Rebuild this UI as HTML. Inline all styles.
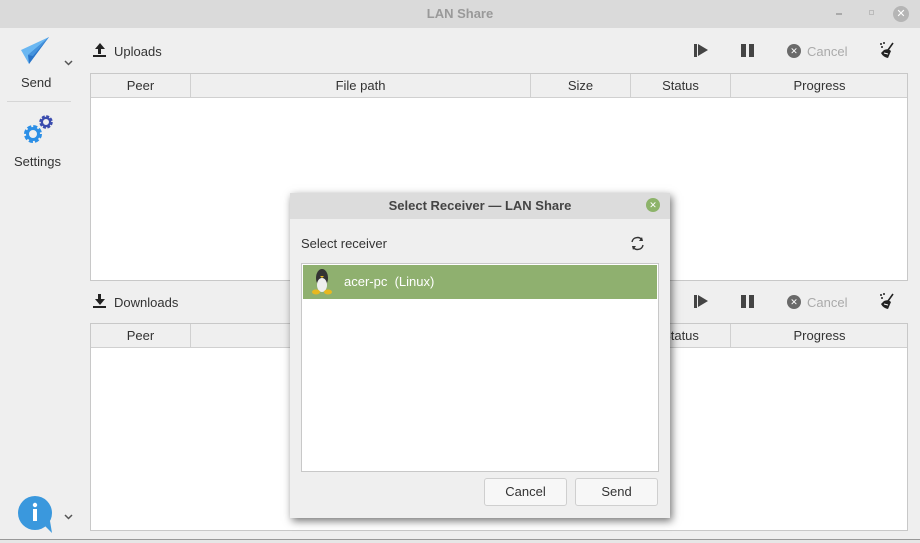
<!DOCTYPE html>
<html><head><style>
*{box-sizing:border-box;margin:0;padding:0}
body{width:920px;height:543px;background:#efefef;font-family:"Liberation Sans","DejaVu Sans",sans-serif;font-size:13px;color:#333;position:relative;overflow:hidden}
.abs{position:absolute}
.tb{left:0;top:0;width:920px;height:28px;background:#dadada;text-align:center;line-height:28px;color:#999;font-weight:bold;font-size:13px}
.tbl{background:#fff;border:1px solid #c8c8c8}
.hdr{position:absolute;left:0;top:0;right:0;height:24px;background:#efefef;border-bottom:1px solid #d0d0d0}
.hdr div{position:absolute;top:0;height:23px;line-height:23px;text-align:center;border-right:1px solid #d0d0d0}
.lbl{font-size:13px;color:#333}
.gray{color:#aaa}
.btn{position:absolute;top:478px;height:28px;background:#f7f7f7;border:1px solid #cfcfcf;border-radius:3px;text-align:center;line-height:26px}
</style></head><body>
<div class="abs tb">LAN Share</div>
<div class="abs" style="left:836px;top:13px;width:6px;height:2px;background:#aaa"></div>
<div class="abs" style="left:869px;top:10px;width:5px;height:5px;border:1px solid #bbb"></div>
<div class="abs" style="left:893px;top:6px;width:16px;height:16px;border-radius:50%;background:#b5b5b5;color:#fff;font-size:11px;text-align:center;line-height:16px;font-weight:bold">✕</div>

<svg width="0" height="0" style="position:absolute"><defs>
<g id="gear"><circle cx="0" cy="0" r="7" fill="none" stroke="currentColor" stroke-width="4" stroke-dasharray="3.7 1.8"/><circle cx="0" cy="0" r="5.5" fill="none" stroke="currentColor" stroke-width="3"/></g>
<g id="chev"><path d="M1 1 L4.5 4.5 L8 1" fill="none" stroke="#555" stroke-width="1.5"/></g>
<g id="broom"><path d="M14 1 L9 8" stroke="#222" stroke-width="1.6"/><path d="M5 8 Q9 6 12 9 L9 16 Q4 15 2 11 Z" fill="#222"/><path d="M5 11 L9 12" stroke="#fff" stroke-width="1"/><circle cx="2" cy="2" r="1" fill="#222"/><circle cx="5" cy="1" r="1" fill="#222"/><circle cx="3" cy="5" r="1" fill="#222"/></g>
</defs></svg>

<!-- sidebar -->
<svg class="abs" style="left:20px;top:36px" width="30" height="30" viewBox="0 0 30 30"><path d="M1 14 L29 1 L9 28 Z" fill="#6ab7f2"/><path d="M8 19 L29 1 L9 28 Z" fill="#2a74c8"/><path d="M8 19 L29 1 L13 20Z" fill="#4593dd"/></svg>
<svg class="abs" style="left:64px;top:60px" width="10" height="7"><use href="#chev"/></svg>
<div class="abs lbl" style="left:21px;top:75px">Send</div>
<div class="abs" style="left:7px;top:101px;width:64px;height:1px;background:#d6d6d6"></div>
<svg class="abs" style="left:22px;top:112px" width="34" height="34"><g transform="translate(11,22)" style="color:#2c8fe6"><use href="#gear"/></g><g transform="translate(24,10) scale(0.75)" style="color:#3b4cae"><use href="#gear"/></g></svg>
<div class="abs lbl" style="left:14px;top:154px">Settings</div>
<svg class="abs" style="left:17px;top:496px" width="36" height="38" viewBox="0 0 36 38"><circle cx="18" cy="17" r="17" fill="#3a98dd"/><path d="M26 28 L35 37 L33 25Z" fill="#3a98dd"/><circle cx="18" cy="9" r="2.2" fill="#fff"/><rect x="16" y="13" width="4" height="12" fill="#fff"/></svg>
<svg class="abs" style="left:64px;top:514px" width="10" height="7"><use href="#chev"/></svg>

<!-- uploads -->
<div class="abs" style="left:93px;top:43px;width:13px;height:14px;border-bottom:2px solid #222"><div style="margin:0 auto;width:0;height:0;border-left:5px solid transparent;border-right:5px solid transparent;border-bottom:6px solid #222"></div><div style="margin:0 auto;width:3px;height:5px;background:#222"></div></div>
<div class="abs lbl" style="left:114px;top:44px">Uploads</div>
<div class="abs" style="left:694px;top:44px;width:3px;height:13px;background:#444"></div>
<div class="abs" style="left:698px;top:44px;width:0;height:0;border-top:6.5px solid transparent;border-bottom:6.5px solid transparent;border-left:10px solid #444"></div>
<div class="abs" style="left:741px;top:44px;width:5px;height:13px;background:#444"></div><div class="abs" style="left:749px;top:44px;width:5px;height:13px;background:#444"></div>
<div class="abs" style="left:787px;top:44px;width:14px;height:14px;border-radius:50%;background:#6a6a6a;color:#fff;font-size:9px;line-height:14px;text-align:center;font-weight:bold">✕</div>
<div class="abs gray" style="left:807px;top:44px">Cancel</div>
<svg class="abs" style="left:879px;top:42px" width="16" height="17"><use href="#broom"/></svg>
<div class="abs tbl" style="left:90px;top:73px;width:818px;height:208px"><div class="hdr">
<div style="left:0;width:100px">Peer</div><div style="left:100px;width:340px">File path</div><div style="left:440px;width:100px">Size</div><div style="left:540px;width:100px">Status</div><div style="left:640px;width:177px;border:none">Progress</div></div></div>

<!-- downloads -->
<div class="abs" style="left:93px;top:294px;width:13px;height:14px;border-bottom:2px solid #222"><div style="margin:0 auto;width:3px;height:5px;background:#222"></div><div style="margin:0 auto;width:0;height:0;border-left:5px solid transparent;border-right:5px solid transparent;border-top:6px solid #222"></div></div>
<div class="abs lbl" style="left:114px;top:295px">Downloads</div>
<div class="abs" style="left:694px;top:295px;width:3px;height:13px;background:#444"></div>
<div class="abs" style="left:698px;top:295px;width:0;height:0;border-top:6.5px solid transparent;border-bottom:6.5px solid transparent;border-left:10px solid #444"></div>
<div class="abs" style="left:741px;top:295px;width:5px;height:13px;background:#444"></div><div class="abs" style="left:749px;top:295px;width:5px;height:13px;background:#444"></div>
<div class="abs" style="left:787px;top:295px;width:14px;height:14px;border-radius:50%;background:#6a6a6a;color:#fff;font-size:9px;line-height:14px;text-align:center;font-weight:bold">✕</div>
<div class="abs gray" style="left:807px;top:295px">Cancel</div>
<svg class="abs" style="left:879px;top:293px" width="16" height="17"><use href="#broom"/></svg>
<div class="abs tbl" style="left:90px;top:323px;width:818px;height:208px"><div class="hdr">
<div style="left:0;width:100px">Peer</div><div style="left:100px;width:340px">File path</div><div style="left:440px;width:100px">Size</div><div style="left:540px;width:100px">Status</div><div style="left:640px;width:177px;border:none">Progress</div></div></div>
<div class="abs" style="left:0;top:539px;width:920px;height:4px;background:#e6e6e6;border-top:1px solid #999"></div>

<!-- dialog -->
<div class="abs" style="left:290px;top:193px;width:380px;height:325px;background:#efefef;box-shadow:2px 3px 8px rgba(0,0,0,.55)">
<div style="height:26px;background:#dcdcdc;text-align:center;line-height:26px;font-weight:bold;color:#444">Select Receiver — LAN Share</div>
<div class="abs" style="left:356px;top:5px;width:14px;height:14px;border-radius:50%;background:#8db36a;color:#fff;font-size:9px;line-height:14px;text-align:center;font-weight:bold">✕</div>
<div class="abs" style="left:11px;top:43px">Select receiver</div>
<svg class="abs" style="left:340px;top:43px" width="15" height="15" viewBox="0 0 15 15"><path d="M2 6 A5.5 5.5 0 0 1 12 4" fill="none" stroke="#333" stroke-width="1.4"/><path d="M13 9 A5.5 5.5 0 0 1 3 11" fill="none" stroke="#333" stroke-width="1.4"/><path d="M12 1 L13 5 L9 5Z" fill="#333"/><path d="M3 14 L2 10 L6 10Z" fill="#333"/></svg>
<div class="abs" style="left:11px;top:70px;width:358px;height:209px;background:#fff;border:1px solid #c8c8c8">
<div style="margin:1px;height:34px;background:#8fb06f;color:#fff;line-height:34px;padding-left:41px">acer-pc&nbsp; (Linux)</div>
<svg class="abs" style="left:10px;top:5px" width="20" height="26" viewBox="0 0 20 26"><ellipse cx="10" cy="9" rx="6" ry="9" fill="#333"/><ellipse cx="10" cy="16" rx="5" ry="7" fill="#eee"/><ellipse cx="4" cy="23" rx="4" ry="2.5" fill="#e8b820"/><ellipse cx="16" cy="23" rx="4" ry="2.5" fill="#e8b820"/><path d="M8 7 L12 7 L10 9Z" fill="#e8b820"/></svg>
</div>
</div>
<div class="btn" style="left:484px;width:83px">Cancel</div>
<div class="btn" style="left:575px;width:83px">Send</div>
</body></html>
